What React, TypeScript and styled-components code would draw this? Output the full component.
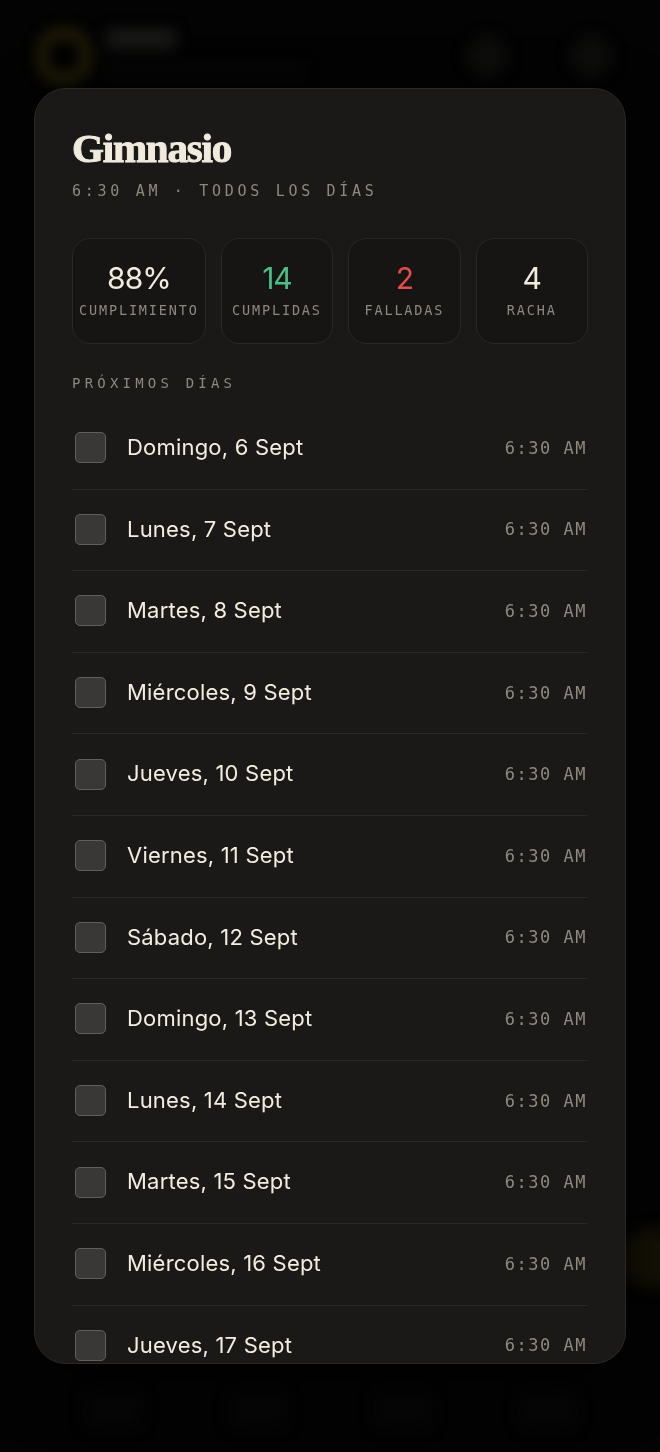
import React from "react";
import styled, { createGlobalStyle } from "styled-components";

const GlobalStyle = createGlobalStyle`
  html, body { margin: 0; padding: 0; background: #030303; }
  body {
    font-family: Inter, "Noto Sans", sans-serif;
    width: 660px;
    height: 1452px;
    overflow: hidden;
  }
  * { box-sizing: border-box; }
`;

const Screen = styled.div`
  position: relative;
  width: 660px;
  height: 1452px;
  overflow: hidden;
  background: #030303;
`;

/* ---------- blurred app behind the sheet ---------- */
const BackdropApp = styled.div`
  position: relative;
  height: 100%;
  filter: blur(7px);
  display: flex;
  flex-direction: column;
  justify-content: space-between;
`;

const AppHeader = styled.header`
  display: flex;
  align-items: center;
  gap: 14px;
  padding: 28px 48px 0 36px;
`;

const LogoRing = styled.div`
  width: 56px;
  height: 56px;
  border-radius: 50%;
  border: 10px solid #262008;
  flex: none;
`;

const AppTitleBlock = styled.div`
  display: flex;
  flex-direction: column;
  gap: 16px;
  flex: 1;
  margin-top: -8px;
`;

const AppTitle = styled.div`
  width: 70px;
  height: 20px;
  border-radius: 6px;
  background: #1a1918;
`;

const AppSub = styled.div`
  width: 200px;
  height: 10px;
  border-radius: 4px;
  background: #080807;
`;

const HeaderBtn = styled.div<{ $gap?: number }>`
  width: 42px;
  height: 42px;
  border-radius: 50%;
  background: #0d0d0c;
  margin-left: ${(p) => p.$gap ?? 0}px;
`;

const AppNav = styled.nav`
  display: flex;
  justify-content: space-around;
  padding: 0 40px 22px;
`;

const NavItem = styled.div`
  width: 60px;
  height: 40px;
  border-radius: 10px;
  background: #060606;
`;

const Fab = styled.div`
  position: absolute;
  right: -22px;
  top: 1228px;
  width: 60px;
  height: 60px;
  border-radius: 50%;
  background: #141105;
`;

/* ---------- sheet overlay ---------- */
const Overlay = styled.div`
  position: absolute;
  inset: 0;
  display: flex;
  justify-content: center;
  align-items: flex-start;
  padding-top: 88px;
`;

const Sheet = styled.section`
  width: 592px;
  height: 1276px;
  border-radius: 32px;
  background: #1b1917;
  border: 1px solid #2b2926;
  box-shadow: 0 20px 60px rgba(0, 0, 0, 0.6);
  overflow: hidden;
  padding: 37px 37px 0;
  display: flex;
  flex-direction: column;
`;

const Title = styled.h1`
  margin: 0;
  font-family: "Liberation Serif", "DejaVu Serif", serif;
  font-weight: 700;
  font-size: 41px;
  line-height: 45px;
  letter-spacing: -1.2px;
  color: #f1ebdd;
  -webkit-text-stroke: 1px #f1ebdd;
`;

const Mono = styled.div<{ $size: number; $ls: number }>`
  font-family: "DejaVu Sans Mono", "Liberation Mono", monospace;
  font-size: ${(p) => p.$size}px;
  letter-spacing: ${(p) => p.$ls}px;
  color: #8e897f;
  text-transform: uppercase;
  white-space: nowrap;
`;

const Subtitle = styled(Mono)`
  margin-top: 10px;
  line-height: 20px;
`;

const Stats = styled.div`
  display: flex;
  gap: 15px;
  margin-top: 37px;
`;

const StatCard = styled.div`
  flex: 1;
  height: 106px;
  border-radius: 18px;
  border: 1px solid #2a2826;
  background: #171513;
  padding: 0 6px 3px;
  display: flex;
  flex-direction: column;
  align-items: center;
  justify-content: center;
  gap: 7px;
`;

const StatValue = styled.div<{ $color: string }>`
  font-family: Inter, "Noto Sans", sans-serif;
  font-size: 30px;
  line-height: 34px;
  letter-spacing: -1px;
  font-weight: 400;
  color: ${(p) => p.$color};
`;

const StatLabel = styled(Mono)`
  line-height: 16px;
`;

const SectionLabel = styled(Mono)`
  margin-top: 30px;
  line-height: 18px;
`;

const List = styled.ul`
  list-style: none;
  margin: 16px 0 0;
  padding: 0;
`;

const Row = styled.li`
  display: flex;
  align-items: center;
  gap: 21px;
  padding: 24px 0 25px 3px;
  border-bottom: 1px solid #2a2826;
`;

const Check = styled.span`
  width: 31px;
  height: 31px;
  flex: none;
  border-radius: 5px;
  background: #3a3836;
  border: 1.5px solid #625f5a;
`;

const DayName = styled.span`
  flex: 1;
  font-family: Inter, "Noto Sans", sans-serif;
  font-size: 22px;
  line-height: 31.6px;
  letter-spacing: 0.2px;
  color: #f3eddf;
`;

const Time = styled(Mono)`
  line-height: 20px;
  margin-right: 1px;
`;

const stats = [
  { value: "88%", label: "Cumplimiento", color: "#f1ebdd" },
  { value: "14", label: "Cumplidas", color: "#4cbd88" },
  { value: "2", label: "Falladas", color: "#e04d4f" },
  { value: "4", label: "Racha", color: "#f1ebdd" },
];

const days = [
  "Domingo, 6 Sept",
  "Lunes, 7 Sept",
  "Martes, 8 Sept",
  "Miércoles, 9 Sept",
  "Jueves, 10 Sept",
  "Viernes, 11 Sept",
  "Sábado, 12 Sept",
  "Domingo, 13 Sept",
  "Lunes, 14 Sept",
  "Martes, 15 Sept",
  "Miércoles, 16 Sept",
  "Jueves, 17 Sept",
];

export default function App() {
  return (
    <Screen>
      <GlobalStyle />
      <BackdropApp aria-hidden>
        <AppHeader>
          <LogoRing />
          <AppTitleBlock>
            <AppTitle />
            <AppSub />
          </AppTitleBlock>
          <HeaderBtn />
          <HeaderBtn $gap={48} />
        </AppHeader>
        <AppNav>
          <NavItem />
          <NavItem />
          <NavItem />
          <NavItem />
        </AppNav>
        <Fab />
      </BackdropApp>
      <Overlay>
        <Sheet>
          <Title>Gimnasio</Title>
          <Subtitle $size={15} $ls={3.7}>
            6:30 AM · Todos los días
          </Subtitle>
          <Stats>
            {stats.map((s) => (
              <StatCard key={s.label}>
                <StatValue $color={s.color}>{s.value}</StatValue>
                <StatLabel $size={13.5} $ls={1.85}>
                  {s.label}
                </StatLabel>
              </StatCard>
            ))}
          </Stats>
          <SectionLabel $size={14} $ls={4.2}>
            Próximos días
          </SectionLabel>
          <List>
            {days.map((d) => (
              <Row key={d}>
                <Check />
                <DayName>{d}</DayName>
                <Time $size={17} $ls={1.5}>
                  6:30 AM
                </Time>
              </Row>
            ))}
          </List>
        </Sheet>
      </Overlay>
    </Screen>
  );
}
